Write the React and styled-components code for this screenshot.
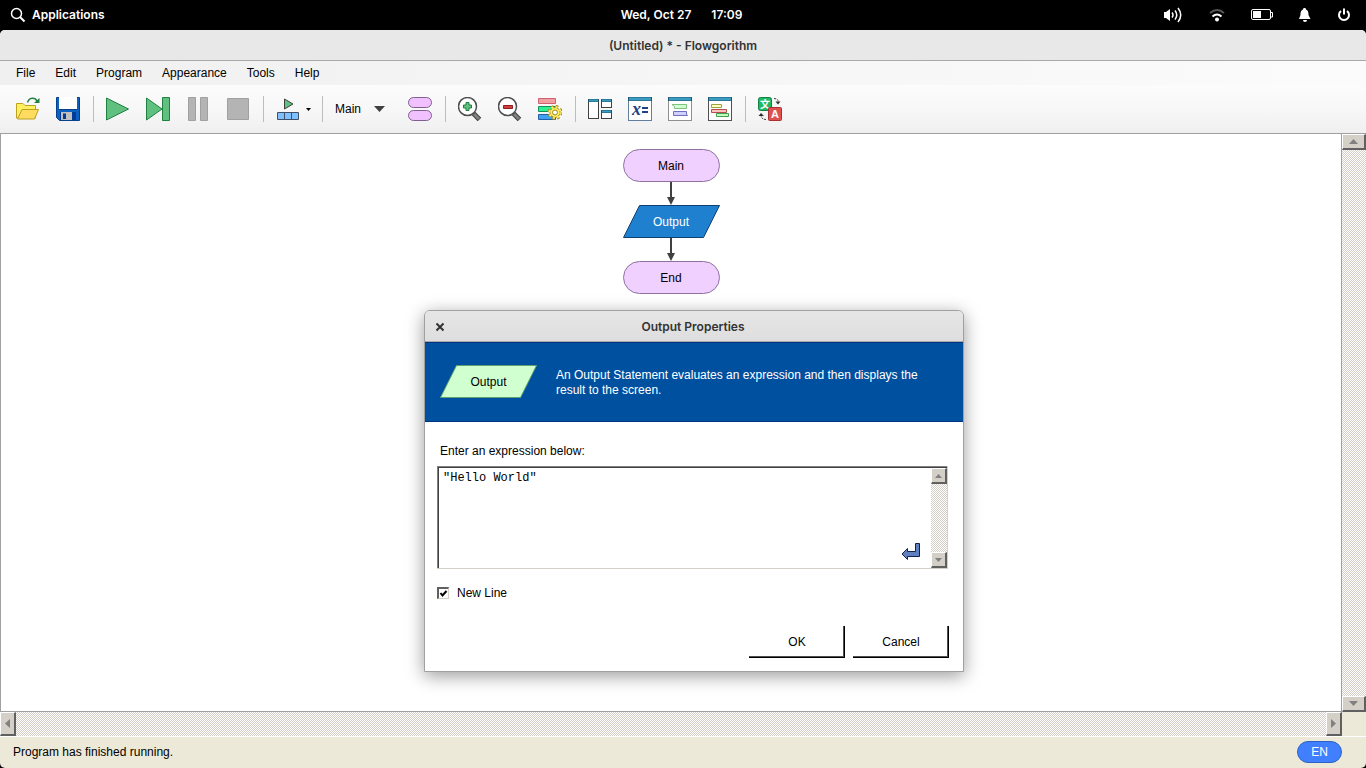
import React, { useState } from "react";
import styled, { createGlobalStyle, css } from "styled-components";

const UI_FONT = '"Liberation Sans", Arial, sans-serif';
const SHELL_FONT = 'Inter, "Open Sans", sans-serif';

const GlobalStyle = createGlobalStyle`
  *, *::before, *::after { box-sizing: border-box; }
  body { margin: 0; background: #000; color: #000; font: 12px/16px ${UI_FONT}; }
  button, select, textarea, input { font: inherit; color: inherit; margin: 0; }
`;

const dither = css`
  background: repeating-conic-gradient(#d4d0c8 0% 25%, #fff 0% 50%) 0 0 / 2px 2px;
`;

const Screen = styled.div`
  min-height: 100vh;
  display: flex;
  flex-direction: column;
`;

/* Desktop panel */
const Panel = styled.header`
  height: 30px;
  padding: 0 15px 0 10px;
  display: grid;
  grid-template-columns: 1fr auto 1fr;
  align-items: center;
  color: #fff;
  font: 600 12px/16px ${SHELL_FONT};
`;
const PanelButton = styled.button`
  display: flex;
  align-items: center;
  gap: 6px;
  padding: 0;
  border: 0;
  background: none;
  justify-self: start;
`;
const Clock = styled.div`
  display: flex;
  gap: 20px;
  padding-left: 2px;
`;
const Indicators = styled.div`
  justify-self: end;
  display: flex;
  align-items: center;
  gap: 26px;
`;

/* Main window */
const Window = styled.main`
  flex: 1;
  display: flex;
  flex-direction: column;
  position: relative;
  background: #ece9d8;
  border-radius: 5px;
  overflow: hidden;
`;
const TitleBar = styled.h1`
  margin: 0;
  height: 31px;
  background: #e8e8e8;
  border-bottom: 1px solid #a9a9a9;
  color: #333;
  text-align: center;
  font: 600 12px/32px ${SHELL_FONT};
`;
const MenuBar = styled.nav`
  height: 24px;
  padding: 0 6px;
  display: flex;
  align-items: center;
  background: linear-gradient(90deg, #f0f0f0, #fbfbfb);
`;
const MenuItem = styled.button`
  padding: 0 10px;
  border: 0;
  background: none;
`;
const Toolbar = styled.div`
  height: 49px;
  padding: 0 8px;
  display: flex;
  align-items: center;
  background: linear-gradient(#fcfcfc, #f6f6f6 60%, #efefef);
  border-bottom: 1px solid #a0a0a0;
`;
const Tool = styled.button`
  height: 40px;
  width: ${(p) => (p.$menu ? 49 : 40)}px;
  padding: 0 0 0 8px;
  display: flex;
  align-items: center;
  gap: 6px;
  border: 0;
  background: none;
`;
const Divider = styled.span`
  width: 10px;
  height: 26px;
  background: linear-gradient(#bdbdbd, #bdbdbd) 5px 0 / 1px 100% no-repeat;
`;
const Picker = styled.label`
  width: 73px;
  display: grid;
  align-items: center;
  > * { grid-area: 1 / 1; }
  svg { justify-self: end; margin-right: 15px; pointer-events: none; }
`;
const PickerSelect = styled.select`
  appearance: none;
  width: 100%;
  height: 24px;
  padding: 0 8px;
  border: 0;
  background: none;
`;

const Work = styled.div`
  flex: 1;
  display: grid;
  grid-template: 1fr 24px / 1fr 24px;
`;
const Canvas = styled.section`
  background: #fff;
  border: solid #a0a0a0;
  border-width: 0 1px 1px;
  padding-top: 15px;
  display: flex;
  flex-direction: column;
  align-items: center;
`;
const Node = styled.div`
  width: 97px;
  height: 33px;
  display: grid;
  place-items: center;
  color: ${(p) => (p.$light ? "#fff" : "#000")};
  > * { grid-area: 1 / 1; }
`;
const Terminal = styled(Node)`
  background: #f0d0ff;
  border: 1px solid #9070a0;
  border-radius: 17px;
`;

const ScrollTrack = styled.div`
  display: flex;
  flex-direction: ${(p) => (p.$row ? "row" : "column")};
  justify-content: space-between;
  ${dither}
`;
const ScrollButton = styled.button`
  width: ${(p) => p.$w}px;
  height: ${(p) => p.$h}px;
  padding: 0;
  display: grid;
  place-items: center;
  background: #d4d0c8;
  border: solid;
  border-width: 1px 2px 2px 1px;
  border-color: #fff #606060 #606060 #fff;
`;
const StatusBar = styled.footer`
  height: 32px;
  padding: 0 24px 1px 13px;
  display: flex;
  align-items: center;
  justify-content: space-between;
  border-top: 1px solid #fff;
`;
const Language = styled.button`
  width: 45px;
  height: 22px;
  padding: 0;
  border: 1px solid #2c62c8;
  border-radius: 11px;
  background: #4080ff;
  color: #fff;
`;

/* Output properties dialog */
const Dialog = styled.form`
  position: absolute;
  left: 424px;
  top: 280px;
  width: 540px;
  background: #fff;
  border: 1px solid #a0a0a0;
  border-radius: 6px 6px 0 0;
  box-shadow: 0 4px 18px rgba(0, 0, 0, 0.4);
`;
const DialogTitle = styled.div`
  height: 31px;
  padding: 0 10px;
  display: grid;
  grid-template-columns: 10px 1fr 12px;
  align-items: center;
  background: linear-gradient(#e6e6e6, #dedede);
  border-bottom: 1px solid #a9a9a9;
  border-radius: 5px 5px 0 0;
  h2 { margin: 0; color: #333; text-align: center; font: 600 12px/32px ${SHELL_FONT}; }
`;
const CloseButton = styled.button`
  padding: 0;
  border: 0;
  background: none;
  display: flex;
`;
const Banner = styled.div`
  height: 80px;
  padding: 22px 15px;
  display: flex;
  align-items: flex-start;
  gap: 19px;
  background: #0050a0;
  border: solid #003480;
  border-width: 1px 0;
  p { margin: 0; padding-top: 3px; width: 390px; color: #fff; line-height: 15px; }
`;
const Body = styled.div`
  padding: 21px 14px 13px 12px;
`;
const FieldLabel = styled.label`
  display: block;
  padding: 0 3px;
  margin-bottom: 7px;
`;
const Field = styled.div`
  position: relative;
  height: 103px;
  margin-right: 1px;
  display: flex;
  border: solid #d4d0c8;
  border-width: 0 1px 1px 0;
  box-shadow: inset 1px 1px #808080, inset 2px 2px #404040;
  padding: 2px 0 0 2px;
  textarea {
    flex: 1;
    border: 0;
    padding: 2px 4px;
    resize: none;
    outline: 0;
    overflow: hidden;
    background: none;
    font: 12px/16px "Liberation Mono", monospace;
  }
`;
const ReturnMark = styled.svg`
  position: absolute;
  right: 26px;
  bottom: 6px;
`;
const CheckRow = styled.label`
  display: flex;
  align-items: center;
  gap: 8px;
  margin: 16px 0 25px;
`;
const Check = styled.input`
  appearance: none;
  width: 12px;
  height: 12px;
  border: solid;
  border-width: 2px 1px 1px 2px;
  border-color: #606060 #d4d0c8 #d4d0c8 #606060;
  &:checked {
    background: url("data:image/svg+xml,%3Csvg xmlns='http://www.w3.org/2000/svg' width='9' height='9'%3E%3Cpath d='M1.5 4L3.5 6.5L7.5 2' fill='none' stroke='%23000' stroke-width='2'/%3E%3C/svg%3E") no-repeat;
  }
`;
const Actions = styled.div`
  display: flex;
  justify-content: flex-end;
  gap: 8px;
`;
const ActionButton = styled.button`
  width: 96px;
  height: 32px;
  padding: 0;
  border: 0;
  background: #fff;
  box-shadow: inset -1px -1px #000, inset -2px -2px #505050;
`;

const Arrow = ({ dir = "up", w = 9, h = 5, fill = "#808080" }) => {
  const d = {
    up: `M0 ${h}L${w / 2} 0L${w} ${h}Z`,
    down: `M0 0H${w}L${w / 2} ${h}Z`,
    left: `M${w} 0V${h}L0 ${h / 2}Z`,
    right: `M0 0V${h}L${w} ${h / 2}Z`,
  }[dir];
  return <svg width={w} height={h} aria-hidden="true"><path d={d} fill={fill} /></svg>;
};

const Icon = ({ children }) => (
  <svg width="24" height="24" viewBox="0 0 24 24" fill="none" aria-hidden="true">{children}</svg>
);

const Green = { fill: "#60c080", stroke: "#208040" };
const Grey = { fill: "#b4b4b4", stroke: "#a0a0a0" };
const Purple = { fill: "#f0c0ff", stroke: "#806090" };

const Pane = ({ x, y, w, h, bar = 3, edge = "#404040" }) => (
  <g>
    <rect x={x + 0.5} y={y + 0.5} width={w - 1} height={h - 1} fill="#fff" stroke={edge} />
    <path d={`M${x} ${y + bar / 2}h${w}`} stroke="#1e5470" strokeWidth={bar} />
    <path d={`M${x + 1} ${y + bar / 2}h${w - 2}`} stroke="#3a9cc0" strokeWidth={bar - 1} />
  </g>
);
const Lens = () => (
  <g>
    <path d="M15.500 16.500L21.500 22.500" stroke="#404040" strokeWidth="5" />
    <path d="M16 17L21 22" stroke="#808080" strokeWidth="3" />
    <circle cx="9.500" cy="9.500" r="9" fill="#fff" stroke="#505050" strokeWidth="1.500" />
  </g>
);

const icons = {
  open: (
    <Icon>
      <path d="M.5 21V6.500H7L9 8.500H19.500V21Z" fill="#fff060" stroke="#c0a020" />
      <path d="M6 12.500H22.500L18.500 22H1.500Z" fill="#ffdc60" stroke="#c0a020" />
      <path d="M11.500 5.500C13 0 19 0 21 4" stroke="#208040" strokeWidth="1.500" />
      <path d="M23.500 1V6H18Z" fill="#208040" />
    </Icon>
  ),
  save: (
    <Icon>
      <path d="M.5 .5H23.500V23.500H3.500L.5 20.500Z" fill="#0c60c0" stroke="#08408c" />
      <path d="M3 0H21V12H3Z" fill="#fff" />
      <path d="M3 12.500H21" stroke="#08408c" />
      <path d="M4 15H20V23H4Z" fill="#003c98" />
      <path d="M5 15H16V23H5Z" fill="#c0c0c0" />
      <path d="M7 16.500H10V22H7Z" fill="#003c98" />
    </Icon>
  ),
  run: <Icon><path d="M.5 1L22.500 12L.5 23Z" {...Green} /></Icon>,
  step: <Icon><path d="M.5 1L16 12L.5 23Z" {...Green} /><path d="M16.500 .5H23.500V23.500H16.500Z" {...Green} /></Icon>,
  pause: <Icon><path d="M2.500 .5H9.500V23.500H2.500ZM14.500 .5H21.500V23.500H14.500Z" {...Grey} /></Icon>,
  stop: <Icon><path d="M1.500 1.500H22.500V22.500H1.500Z" {...Grey} /></Icon>,
  speed: (
    <Icon>
      <path d="M8.500 2L17 7L8.500 12Z" fill="#60c080" stroke="#404040" />
      <path d="M1.500 15.500H22.500V22.500H1.500ZM8.500 15.500V22.500M15.500 15.500V22.500" fill="#80c0ff" stroke="#405068" />
    </Icon>
  ),
  functions: (
    <Icon>
      <rect x=".5" y=".5" width="23" height="10" rx="5" {...Purple} />
      <rect x=".5" y="13.500" width="23" height="10" rx="5" {...Purple} />
    </Icon>
  ),
  zoomIn: <Icon><Lens /><path d="M8 5.500H11V8H13.500V11H11V13.500H8V11H5.500V8H8Z" {...Green} /></Icon>,
  zoomOut: <Icon><Lens /><path d="M5.500 8.500H14.500V11.500H5.500Z" fill="#d04040" stroke="#902020" /></Icon>,
  style: (
    <Icon>
      <path d="M.5 1.500H17.500V6.500H.5Z" fill="#f0a0a0" stroke="#d06070" />
      <path d="M.5 9.500H17.500V14.500H.5Z" fill="#30f090" stroke="#109060" />
      <path d="M.5 17.500H17.500V22.500H.5Z" fill="#40a0f0" stroke="#2060a8" />
      <circle cx="17" cy="15.500" r="6" stroke="#a08820" strokeWidth="3" strokeDasharray="2.500 2.210" />
      <circle cx="17" cy="15.500" r="5" fill="#fff060" stroke="#a08820" />
      <circle cx="17" cy="15.500" r="5.500" stroke="#fff060" strokeWidth="2" strokeDasharray="2 2.320" />
      <circle cx="17" cy="15.500" r="2.500" fill="#fff" stroke="#a08820" />
    </Icon>
  ),
  layout: (
    <Icon>
      <Pane x={0} y={2} w={11} h={20} />
      <Pane x={13} y={2} w={11} h={9} />
      <Pane x={13} y={13} w={11} h={9} />
    </Icon>
  ),
  variables: (
    <Icon>
      <Pane x={0} y={0} w={24} h={24} bar={4} edge="#6080a0" />
      <text x="4" y="18" fontFamily="Liberation Serif, serif" fontSize="18" fontWeight="700" fontStyle="italic" fill="#204088">x</text>
      <path d="M14 11H20M14 15H20" stroke="#204088" strokeWidth="2" />
    </Icon>
  ),
  console: (
    <Icon>
      <Pane x={0} y={0} w={24} h={24} bar={4} edge="#909090" />
      <path d="M4 7.500H18.500V11.500H6.500V9.500Z" fill="#d0ffd0" stroke="#80c080" />
      <path d="M5.500 14.500H18.500V17L19.500 18.500H5.500Z" fill="#d0d0ff" stroke="#7070c0" />
    </Icon>
  ),
  source: (
    <Icon>
      <Pane x={0} y={0} w={24} h={24} bar={4} edge="#505050" />
      <path d="M3.500 7.500H13.500V10.500H3.500Z" fill="#ffffc0" stroke="#a0a040" />
      <path d="M3.500 12.500H18.500V15.500H3.500Z" fill="#ffc0c0" stroke="#b05050" />
      <path d="M8.500 16.500H20.500V19.500H8.500Z" fill="#c0ffc0" stroke="#40a050" />
    </Icon>
  ),
  translate: (
    <Icon>
      <rect x=".5" y=".5" width="13" height="13" rx="2" fill="#20b860" stroke="#108040" />
      <text x="2" y="11" fontFamily="Noto Sans CJK SC, sans-serif" fontSize="10" fontWeight="700" fill="#fff">文</text>
      <rect x="10.500" y="10.500" width="13" height="13" rx="1" fill="#e05050" stroke="#a83030" />
      <text x="17" y="21" textAnchor="middle" fontFamily="Liberation Sans, sans-serif" fontSize="11" fontWeight="700" fill="#fff">A</text>
      <path d="M16 1.500C19 1.500 20.500 3 20.500 5.500M8 22.500C5 22.500 3 21 3 18" stroke="#404040" strokeDasharray="2 1" />
      <path d="M17.500 4.500H22.500L20 7.500ZM.5 19L3 16L6 19Z" fill="#303030" />
    </Icon>
  ),
};

const Parallelogram = ({ fill, stroke }) => (
  <svg width="97" height="33" aria-hidden="true">
    <path d="M16.500 .5H96.500L80.500 32.500H.5Z" fill={fill} stroke={stroke} />
  </svg>
);
const Connector = () => (
  <svg width="9" height="23" aria-hidden="true">
    <path d="M3 0H5V16H3ZM0 15H8L4 23Z" fill="#404040" />
  </svg>
);

const toolGroups = [
  [["open", "Open"], ["save", "Save"]],
  [["run", "Run"], ["step", "Step"], ["pause", "Pause"], ["stop", "Stop"]],
  [["speed", "Speed"]],
  [["functions", "Functions"]],
  [["zoomIn", "Zoom in"], ["zoomOut", "Zoom out"], ["style", "Chart style"]],
  [["layout", "Layout windows"], ["variables", "Variables"], ["console", "Console"], ["source", "Source code"]],
  [["translate", "Language"]],
];

export default function App() {
  const [expression, setExpression] = useState('"Hello World"');
  const [newLine, setNewLine] = useState(true);
  return (
    <Screen>
      <GlobalStyle />
      <Panel>
        <PanelButton>
          <svg width="16" height="16" fill="none" stroke="#fff" strokeWidth="1.500" aria-hidden="true">
            <circle cx="6.500" cy="6.500" r="5" /><path d="M10 10L14.500 14.500" strokeWidth="2" />
          </svg>
          Applications
        </PanelButton>
        <Clock><span>Wed, Oct 27</span><span>17:09</span></Clock>
        <Indicators>
          <svg width="20" height="16" fill="none" stroke="#fff" strokeWidth="1.500" aria-label="Volume" role="img">
            <path d="M1 5H3L7 2V14L3 11H1Z" fill="#fff" stroke="none" />
            <path d="M9 5.500Q11 8 9 10.500M12 3.500Q15.500 8 12 12.500M15 1Q20.500 8 15 15" />
          </svg>
          <svg width="16" height="16" fill="none" stroke="#fff" strokeWidth="2" aria-label="Wi-Fi" role="img">
            <path d="M1 6Q8 0 15 6" stroke="#555" /><path d="M3.500 9.500Q8 5.500 12.500 9.500" /><circle cx="8" cy="12.500" r="1" fill="#fff" />
          </svg>
          <svg width="22" height="12" fill="none" stroke="#fff" aria-label="Battery" role="img">
            <rect x=".5" y=".5" width="19" height="10" rx="1.500" /><path d="M19.500 3.500H21.500V8H19.500" /><path d="M2 2H10V9H2Z" fill="#fff" stroke="none" />
          </svg>
          <svg width="12" height="16" fill="#fff" aria-label="Notifications" role="img">
            <path d="M5.500 1C6.500 1 7 1.500 7 2.500C9.500 3.500 9.500 6 9.500 8L11.500 12H0L1.500 8C1.500 6 1.500 3.500 4 2.500C4 1.500 4.500 1 5.500 1ZM4 13H8Q8 15 6 15Q4 15 4 13Z" />
          </svg>
          <svg width="14" height="16" fill="none" stroke="#fff" strokeWidth="2" aria-label="Power" role="img">
            <path d="M4 4A5 5 0 1 0 10 4M7 1.500V7.500" />
          </svg>
        </Indicators>
      </Panel>

      <Window>
        <TitleBar>(Untitled) * - Flowgorithm</TitleBar>
        <MenuBar>
          {["File", "Edit", "Program", "Appearance", "Tools", "Help"].map((m) => <MenuItem key={m}>{m}</MenuItem>)}
        </MenuBar>
        <Toolbar>
          {toolGroups.map((group, i) => (
            <React.Fragment key={i}>
              {i > 0 && <Divider />}
              {i === 3 && (
                <Picker>
                  <PickerSelect aria-label="Function"><option>Main</option></PickerSelect>
                  <Arrow dir="down" w={11} h={6} fill="#404040" />
                </Picker>
              )}
              {group.map(([key, label]) => (
                <Tool key={key} type="button" aria-label={label} $menu={key === "speed"}>
                  {icons[key]}
                  {key === "speed" && <Arrow dir="down" w={5} h={3} fill="#000" />}
                </Tool>
              ))}
            </React.Fragment>
          ))}
        </Toolbar>

        <Work>
          <Canvas>
            <Terminal>Main</Terminal>
            <Connector />
            <Node $light><Parallelogram fill="#2080d0" stroke="#104070" /><span>Output</span></Node>
            <Connector />
            <Terminal>End</Terminal>
          </Canvas>
          <ScrollTrack>
            <ScrollButton $w={24} $h={16} aria-label="Scroll up"><Arrow /></ScrollButton>
            <ScrollButton $w={24} $h={16} aria-label="Scroll down"><Arrow dir="down" /></ScrollButton>
          </ScrollTrack>
          <ScrollTrack $row>
            <ScrollButton $w={16} $h={24} aria-label="Scroll left"><Arrow dir="left" w={5} h={9} /></ScrollButton>
            <ScrollButton $w={16} $h={24} aria-label="Scroll right"><Arrow dir="right" w={5} h={9} /></ScrollButton>
          </ScrollTrack>
        </Work>
        <StatusBar>
          <span>Program has finished running.</span>
          <Language>EN</Language>
        </StatusBar>

        <Dialog role="dialog" aria-labelledby="dialog-title" onSubmit={(e) => e.preventDefault()}>
          <DialogTitle>
            <CloseButton type="button" aria-label="Close">
              <svg width="10" height="10" stroke="#333" strokeWidth="2"><path d="M1.500 1.500L8.500 8.500M8.500 1.500L1.500 8.500" /></svg>
            </CloseButton>
            <h2 id="dialog-title">Output Properties</h2>
          </DialogTitle>
          <Banner>
            <Node><Parallelogram fill="#d0ffd0" stroke="#60a070" /><span>Output</span></Node>
            <p>An Output Statement evaluates an expression and then displays the result to the screen.</p>
          </Banner>
          <Body>
            <FieldLabel htmlFor="expression">Enter an expression below:</FieldLabel>
            <Field>
              <textarea id="expression" spellCheck="false" value={expression} onChange={(e) => setExpression(e.target.value)} />
              <ScrollTrack>
                <ScrollButton type="button" $w={16} $h={16} aria-label="Scroll up"><Arrow w={7} h={4} /></ScrollButton>
                <ScrollButton type="button" $w={16} $h={16} aria-label="Scroll down"><Arrow dir="down" w={7} h={4} /></ScrollButton>
              </ScrollTrack>
              <ReturnMark width="20" height="20" aria-hidden="true">
                <path d="M14.500 1.500H18.500V14.500H6.500V17.500L1 12L6.500 6.500V9.500H14.500Z" fill="#6080c0" stroke="#102050" />
              </ReturnMark>
            </Field>
            <CheckRow>
              <Check type="checkbox" checked={newLine} onChange={(e) => setNewLine(e.target.checked)} />
              New Line
            </CheckRow>
            <Actions>
              <ActionButton type="submit">OK</ActionButton>
              <ActionButton type="button">Cancel</ActionButton>
            </Actions>
          </Body>
        </Dialog>
      </Window>
    </Screen>
  );
}
